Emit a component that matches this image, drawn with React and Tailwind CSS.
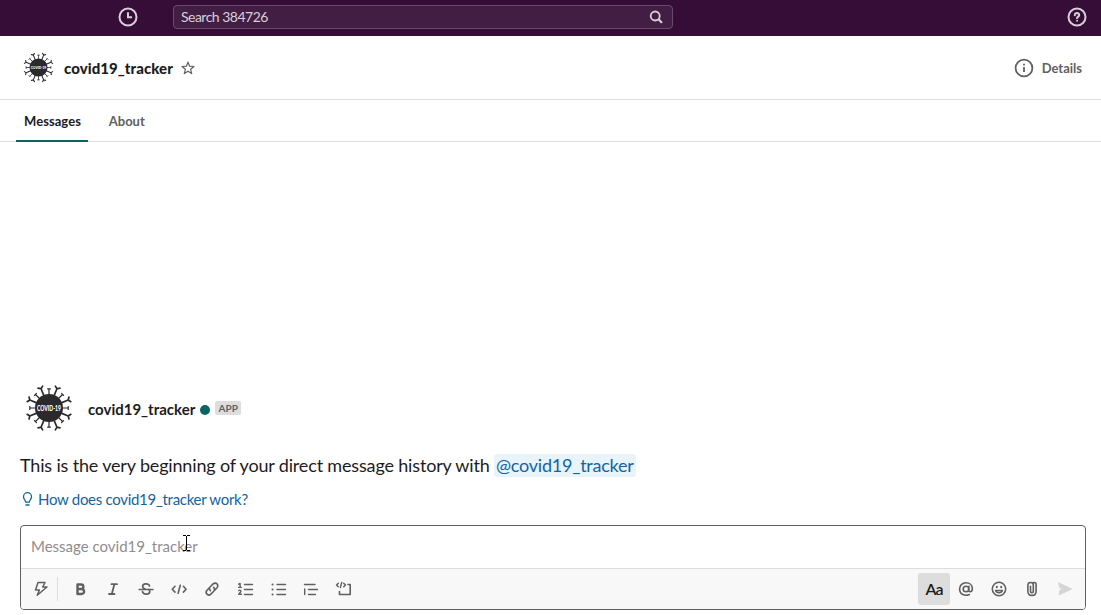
import React from "react";

const LONG = [22.5, 67.5, 112.5, 157.5, 202.5, 247.5, 292.5, 337.5];
const SHORT = [0, 45, 90, 135, 180, 225, 270, 315];

function Virus({ className }) {
  return (
    <svg viewBox="-24 -24 48 48" className={className} fill="none" stroke="#2b292e" strokeLinecap="round">
      <circle r="14" fill="#2b292e" stroke="none" />
      {LONG.map((a) => (
        <g key={a} transform={`rotate(${a})`} strokeWidth="1.7">
          <path d="M0 -12V-20.8M-2.5 -22.6L0 -20.8L2.5 -22.6" />
        </g>
      ))}
      {SHORT.map((a) => (
        <g key={a} transform={`rotate(${a})`} strokeWidth="1.2">
          <path d="M0 -12V-18.8M-1.4 -19.2H1.4" />
        </g>
      ))}
      <text x="0" y="2.6" textAnchor="middle" fontFamily="Lato, sans-serif" fontWeight="900" fontSize="6.9" textLength="24" lengthAdjust="spacingAndGlyphs" fill="#fff" stroke="none">COVID-19</text>
    </svg>
  );
}

function Icon({ children, size = 18, w = 1.5, className = "" }) {
  return (
    <svg width={size} height={size} viewBox={`0 0 ${size} ${size}`} fill="none" stroke="currentColor" strokeWidth={w} strokeLinecap="round" strokeLinejoin="round" className={`shrink-0 ${className}`}>
      {children}
    </svg>
  );
}

function Tool({ children, className = "" }) {
  return <button className={`flex h-8 w-8 shrink-0 items-center justify-center rounded-[3px] ${className}`}>{children}</button>;
}

export default function App() {
  return (
    <div className="flex h-[615px] w-[1101px] flex-col overflow-hidden bg-white font-['Lato',sans-serif] text-[15px] text-[#1d1c1d]">
      <header className="flex h-9 shrink-0 items-center bg-[#350d36] pr-[14px] pb-[2px] text-[#d7cfd7]">
        <Icon size={20} w={2} className="ml-[118px]">
          <circle cx="10" cy="10" r="8.5" />
          <path d="M10 5.3V10.3H14" strokeLinecap="butt" strokeLinejoin="miter" />
        </Icon>
        <div className="ml-[35px] flex h-6 w-[500px] items-center justify-between rounded-[4px] border border-[#684a69] bg-[#431e44] pr-[9px] pl-[7px]">
          <span className="text-[14px] leading-5 tracking-[-0.51px]">Search 384726</span>
          <Icon size={14} w={1.8}>
            <circle cx="6.2" cy="6" r="4.5" />
            <path d="M9.7 9.5L12.4 12.2" strokeWidth="2.2" />
          </Icon>
        </div>
        <Icon size={20} w={2} className="ml-auto">
          <circle cx="10" cy="10" r="8.5" />
          <path d="M7.8 8.2C7.8 5.3 12.3 5.5 12.2 8.1C12.1 9.6 10 9.6 10 11.3" />
          <circle cx="10" cy="13.8" r=".5" strokeWidth="1" fill="currentColor" />
        </Icon>
      </header>

      <section className="flex h-16 shrink-0 items-center border-b border-[#dddddd] pr-[19px] pl-[23px]">
        <Virus className="mb-px h-[31px] w-[31px] shrink-0" />
        <h1 className="ml-[10px] text-[15px] leading-[22px] font-black tracking-[0.05px]">covid19_tracker</h1>
        <Icon size={14} w={1.2} className="ml-2 text-[#616061]">
          <path d="M7 1.1L8.6 5.2L13 5.5L9.6 8.3L10.7 12.6L7 10.2L3.3 12.6L4.4 8.3L1 5.5L5.4 5.2Z" />
        </Icon>
        <div className="ml-auto flex items-center gap-2 text-[#616061]">
          <Icon size={20} w={1.8}>
            <circle cx="10" cy="10" r="8.4" />
            <path d="M10 9V14" strokeWidth="1.8" strokeLinecap="butt" />
            <path d="M10 5.8V7.6" strokeWidth="1.8" strokeLinecap="butt" />
          </Icon>
          <span className="pt-[2px] text-[13px] font-bold">Details</span>
        </div>
      </section>

      <nav className="flex h-[42px] shrink-0 border-b border-[#dddddd] pl-4 text-[13px] font-bold">
        <div className="-mb-px flex w-[72px] items-center border-b-2 border-[#0b6363] pt-[3px] pl-2 tracking-[0.06px]">Messages</div>
        <div className="ml-3 flex w-[53px] items-center justify-center pt-[3px] pl-[0.5px] text-[#616061]">About</div>
      </nav>

      <main className="flex flex-1 flex-col justify-end px-5">
        <div className="flex items-center">
          <Virus className="mb-px ml-[5px] h-12 w-12 shrink-0" />
          <span className="ml-[15px] pt-[2px] text-[15px] font-bold">covid19_tracker</span>
          <span className="mt-[3px] ml-[5px] h-[10px] w-[10px] rounded-full bg-[#0b6363]" />
          <span className="mb-[2px] ml-[5px] flex h-[14px] w-[26px] items-center justify-center rounded-[2px] bg-[#dddddd] pt-[2px] text-[10px] font-bold text-[#616061]">APP</span>
        </div>
        <p className="mt-[19px] text-[18px] leading-[26px] tracking-[-0.165px]">
          This is the very beginning of your direct message history with <span className="rounded-[3px] bg-[#e8f4fa] px-[2px] pb-px tracking-[-0.24px] text-[#1264a3]">@covid19_tracker</span>
        </p>
        <a className="mt-[10px] mb-[15px] flex h-[22px] items-center text-[15px] tracking-[-0.29px] text-[#1264a3]">
          <Icon size={14} w={1.3} className="mr-1">
            <path d="M5.7 10.2C5.7 8 3.5 7.5 3.5 4.7A4 4 0 0 1 11.5 4.7C11.5 7.5 9.3 8 9.3 10.2Z" />
            <path d="M6 13H9" />
          </Icon>
          How does covid19_tracker work?
        </a>
      </main>

      <footer className="mx-5 mr-[15px] mb-[5px] flex h-[85px] shrink-0 flex-col overflow-hidden rounded-[4px] border border-[#616061]">
        <div className="relative h-[42px] pt-[9px] pl-[10px] leading-[22px] text-[#918c91]">
          Message covid19_tracker
          <svg className="absolute top-[9px] left-[161px]" width="9" height="17" viewBox="0 0 9 17" fill="none" stroke="#000" shapeRendering="crispEdges">
            <path d="M1 .5H4M5 .5H8M4.5 1V15M1 15.5H4M5 15.5H8" />
          </svg>
        </div>
        <div className="flex flex-1 items-center gap-px border-t border-[#dddddd] bg-[#f8f8f8] pr-[3px] pl-1 text-[#616061]">
          <Tool>
            <Icon w={1.5}><path d="M6 2.5H13L10.7 7H15L5.2 15.3L7.4 10H3.5Z" /></Icon>
          </Tool>
          <div className="-ml-px mr-[5px] h-6 w-px shrink-0 bg-[#dddddd]" />
          <Tool>
            <Icon w={2.4} className="translate-x-[0.7px] translate-y-[0.5px]"><path d="M5.8 4H9.3C12.5 4 12.5 8.5 9.3 8.5H5.8M9.5 8.5C13.3 8.5 13.3 13.5 9.7 13.5H5.8V4" /></Icon>
          </Tool>
          <Tool>
            <Icon w={1.8}><path d="M7.5 4.2H13M5 14H10.5M10.4 4.2L7.8 14" /></Icon>
          </Tool>
          <Tool>
            <Icon w={1.7}><path d="M2.3 9.5H15.9M12.5 5.9C11.5 2.9 5.6 3.3 5.6 6.3C5.6 7.6 6.6 8.5 8.5 9.3M5.5 11.7C6.1 15.1 12.8 14.7 12.8 11.5C12.8 10.8 12.4 10 11.6 9.5" /></Icon>
          </Tool>
          <Tool>
            <Icon w={1.6}><path d="M5 6.3L2.3 9.2L5 12.1M13.4 6.3L16.1 9.2L13.4 12.1M10.3 5.2L8.1 13.2" /></Icon>
          </Tool>
          <Tool>
            <Icon w={1.6}><path d="M7.4 10.6C6.1 9.3 6.3 7.7 7.3 6.7L10.1 3.9C11.2 2.8 12.9 2.8 14 3.9C15.1 5 15.1 6.7 14 7.8L11.7 10.1M10.6 7.4C11.9 8.7 11.7 10.3 10.7 11.3L7.9 14.1C6.8 15.2 5.1 15.2 4 14.1C2.9 13 2.9 11.3 4 10.2L6.3 7.9" /></Icon>
          </Tool>
          <Tool>
            <Icon w={1.4} className="translate-x-[0.5px]">
              <path d="M8 4.5H16M8 9.5H16M8 14.5H16" />
              <path d="M2.2 4.2L3.6 3.5V7.2M2.2 7.4H4.8M2.2 10.6C3.2 9.7 5 10.4 4.2 11.7L2.2 14.2H4.9" strokeWidth="1.4" />
            </Icon>
          </Tool>
          <Tool>
            <Icon w={1.4} className="translate-x-[0.5px]"><path d="M7.5 4.5H16M7.5 9.5H16M7.5 14.5H16" /><path d="M3 4.5H3.1M3 9.5H3.1M3 14.5H3.1" strokeWidth="2" /></Icon>
          </Tool>
          <Tool>
            <Icon w={1.4}><path d="M2.5 4.5H13M6.5 9.5H15.5M6.5 14.5H13.5M2.7 9V14.5" /></Icon>
          </Tool>
          <Tool>
            <Icon w={1.6} className="-translate-x-px">
              <path d="M14 4.5H16.2V14.5H5.5V11.5" />
              <path d="M4.3 3.2L2.5 5L4.3 6.8M9.7 3.2L11.5 5L9.7 6.8M7.7 2.4L6.4 7.6" strokeWidth="1.4" />
            </Icon>
          </Tool>
          <div className="ml-auto flex items-center gap-px">
            <Tool className="bg-[#dddddd]">
              <span className="pb-px text-[16px] font-semibold tracking-[-0.9px] text-[#1d1c1d]">Aa</span>
            </Tool>
            <Tool className="-ml-px">
              <Icon w={1.6}><circle cx="9" cy="9" r="2.8" /><path d="M11.9 6.2L11.6 10.1C11.6 12.7 15.4 12.2 15.4 8.8C15.3 5.2 12.5 2.8 9 2.8C5.2 2.8 2.6 5.6 2.6 9.1C2.6 14.5 8 16.5 12.3 14.5" /></Icon>
            </Tool>
            <Tool>
              <Icon w={1.6}><circle cx="9" cy="9" r="6.7" /><path d="M5.5 10.5C6.5 13.5 11.5 13.5 12.5 10.5Z" strokeWidth="1.3" /><path d="M6.8 6.8V7.2M11.2 6.8V7.2" strokeWidth="2" /></Icon>
            </Tool>
            <Tool>
              <Icon w={1.6}><path d="M7.5 6.2V11.2C7.5 13.2 10.3 13.2 10.3 11.2V5.1C10.3 1.6 4.9 1.6 4.9 5.1V11.2C4.9 16.8 13.1 16.8 13.1 11.2V4.2C13.1 2.8 11.5 2.4 10.5 2.6" /></Icon>
            </Tool>
            <Tool className="mr-px text-[#d6d5d6]">
              <Icon w={1}><path d="M3 3L15.5 9L3 15L4.2 10L10 9L4.2 8Z" fill="currentColor" /></Icon>
            </Tool>
          </div>
        </div>
      </footer>
    </div>
  );
}
